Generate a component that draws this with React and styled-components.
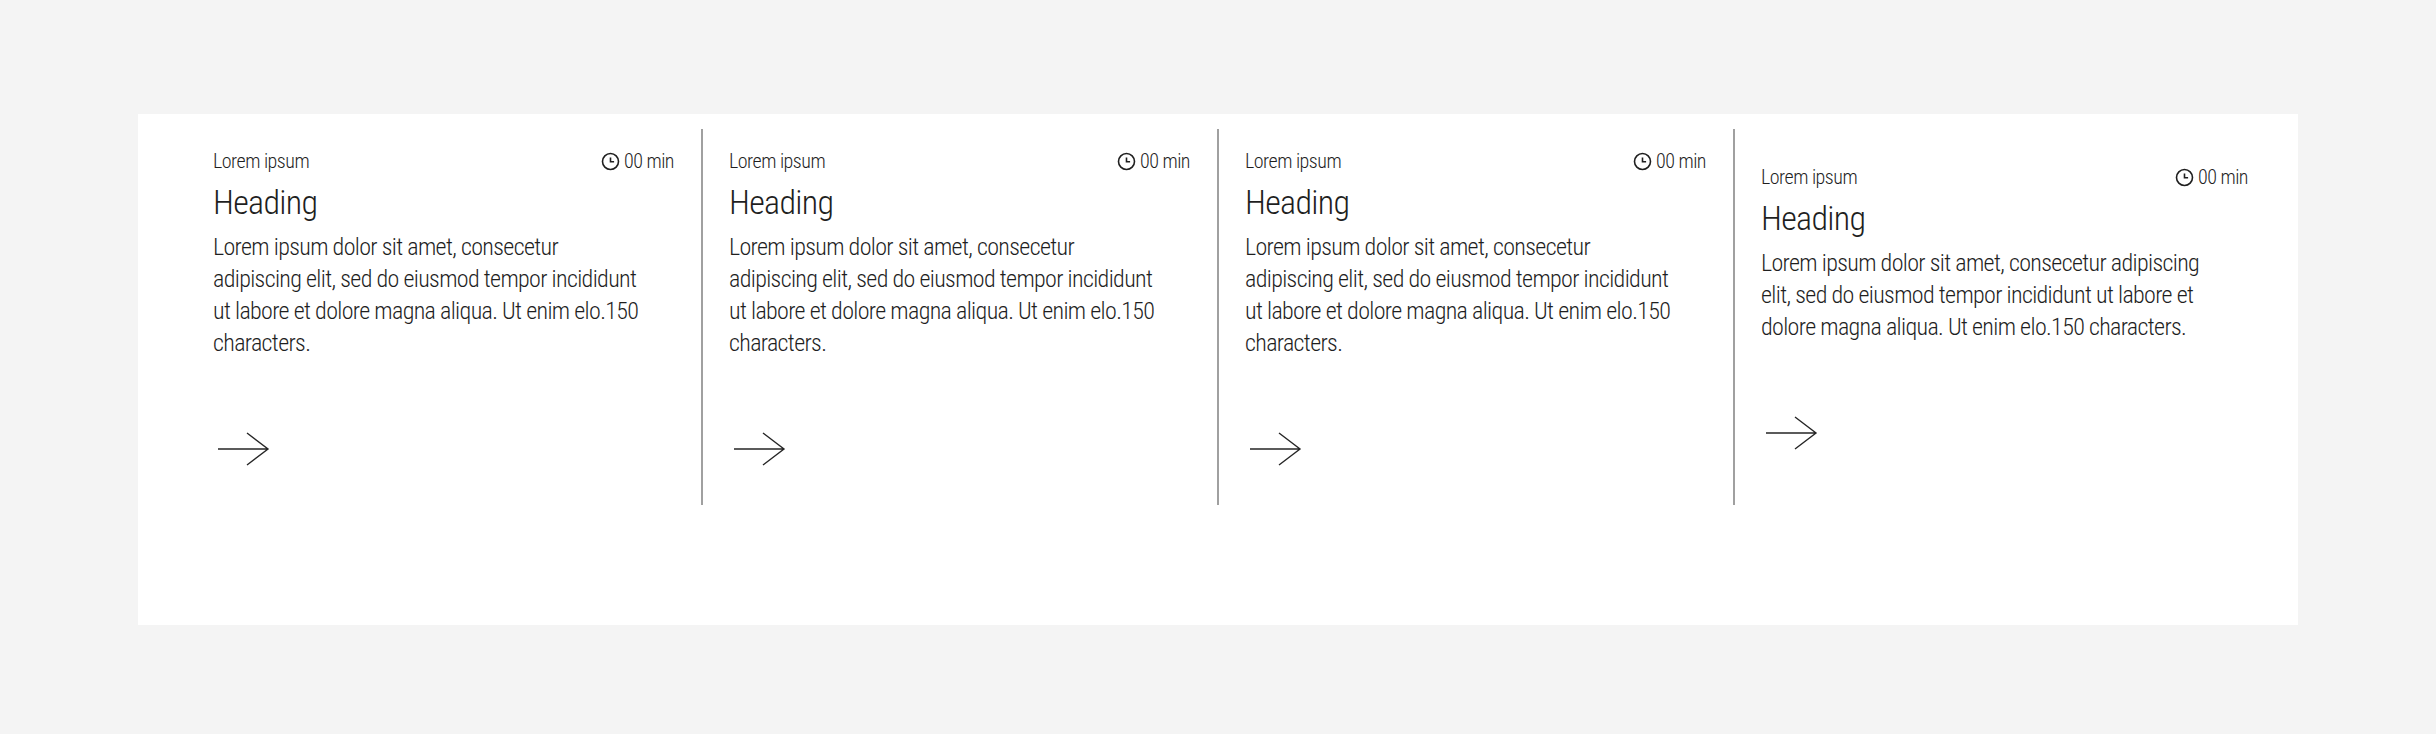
import React from 'react'
import styled, { createGlobalStyle } from 'styled-components'

const GlobalStyle = createGlobalStyle`
 html, body {
  margin: 0;
  background-color: #f4f4f4;
 }
 body {
  font-family: "Roboto Condensed", "Liberation Sans Narrow", "Liberation Sans", sans-serif;
  font-weight: 300;
  color: #1f1f1f;
 }
`

const Page = styled.div`
 height: 734px;
 padding: 114px 138px 0 138px;
 box-sizing: border-box;
`

const Panel = styled.section`
 display: grid;
 grid-template-columns: 565px 516px 516px 1fr;
 height: 511px;
 padding-top: 15px;
 box-sizing: border-box;
 background-color: #fff;
`

const Card = styled.article`
 display: flex;
 flex-direction: column;
 height: 376px;
 box-sizing: border-box;
 padding: ${(p) => p.$top}px ${(p) => p.$right}px 0 ${(p) => p.$left}px;
 border-right: ${(p) => (p.$last ? 'none' : '2px solid #a0a0a0')};
`

const Meta = styled.div`
 display: flex;
 justify-content: space-between;
 align-items: center;
 height: 26px;
 font-size: 20px;
 letter-spacing: -0.5px;
`

const Time = styled.span`
 display: flex;
 align-items: center;
 gap: 4px;
`

const Heading = styled.h3`
 margin: 6px 0 0;
 font-size: 34px;
 line-height: 44px;
 font-weight: 300;
 letter-spacing: -0.7px;
`

const Body = styled.p`
 margin: 7px 0 0;
 max-width: ${(p) => p.$width}px;
 font-size: 24px;
 line-height: 32px;
 letter-spacing: -0.65px;
`

const ArrowLink = styled.a`
 display: block;
 width: 60px;
 height: 40px;
 margin-top: 70px;
`

const ClockIcon = () => (
 <svg width="19" height="19" viewBox="0 0 19 19" fill="none" stroke="#1f1f1f" strokeWidth="1.6">
  <circle cx="9.5" cy="9.5" r="8" />
  <path d="M9.5 5.5v4.2h3.6" />
 </svg>
)

const ArrowIcon = () => (
 <svg width="60" height="40" viewBox="0 0 60 40" fill="none" stroke="#262626" strokeWidth="1.4">
  <path d="M5 20h50M34 4l21 16-21 16" />
 </svg>
)

const cards = [
 { left: 75, right: 27, top: 19, width: 436 },
 { left: 26, right: 27, top: 19, width: 436 },
 { left: 26, right: 27, top: 19, width: 436 },
 { left: 26, right: 50, top: 35, width: 450, last: true },
]

const App = () => (
 <Page>
  <GlobalStyle />
  <Panel>
   {cards.map((card, index) => (
    <Card key={index} $left={card.left} $right={card.right} $top={card.top} $last={card.last}>
     <Meta>
      <span>Lorem ipsum</span>
      <Time>
       <ClockIcon />
       00 min
      </Time>
     </Meta>
     <Heading>Heading</Heading>
     <Body $width={card.width}>
      Lorem ipsum dolor sit amet, consecetur adipiscing elit, sed do eiusmod tempor incididunt ut labore et dolore magna aliqua. Ut enim elo.150 characters.
     </Body>
     <ArrowLink href="#">
      <ArrowIcon />
     </ArrowLink>
    </Card>
   ))}
  </Panel>
 </Page>
)

export default App
